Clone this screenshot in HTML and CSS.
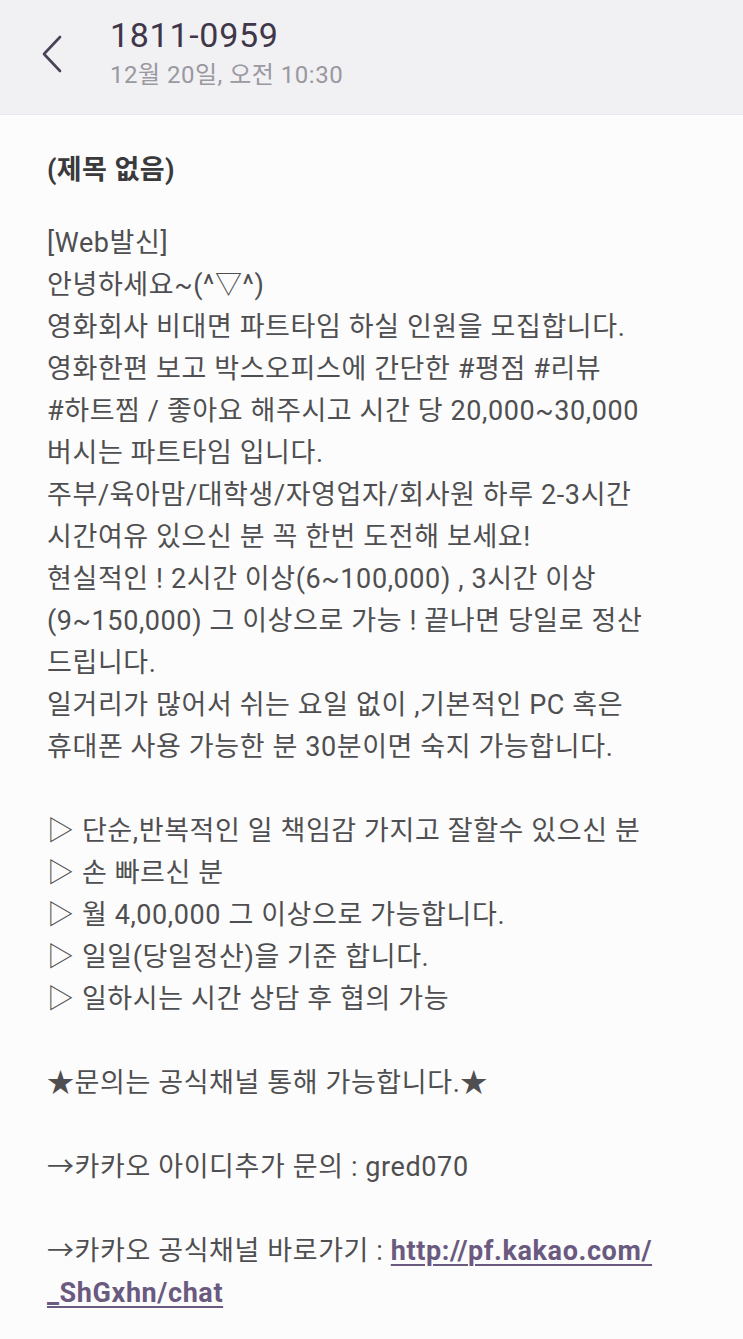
FILE: index.html
```html
<!DOCTYPE html>
<html lang="ko">
<head>
<meta charset="utf-8">
<link rel="stylesheet" href="styles.css">
</head>
<body>
<header class="topbar">
  <div class="back">
    <svg width="24" height="40" viewBox="0 0 24 40"><path d="M20 3 L4 20 L20 37" fill="none" stroke="#4a4256" stroke-width="2.6" stroke-linecap="round" stroke-linejoin="round"/></svg>
  </div>
  <div class="meta">
    <div class="number">1811-0959</div>
    <div class="date">12월 20일, 오전 10:30</div>
  </div>
</header>
<main class="content">
  <div class="subject">(제목 없음)</div>
  <div class="body">
    <div class="ln">[Web발신]</div>
    <div class="ln">안녕하세요~(^▽^)</div>
    <div class="ln">영화회사 비대면 파트타임 하실 인원을 모집합니다.</div>
    <div class="ln">영화한편 보고 박스오피스에 간단한 #평점 #리뷰</div>
    <div class="ln">#하트찜 / 좋아요 해주시고 시간 당 20,000~30,000</div>
    <div class="ln">버시는 파트타임 입니다.</div>
    <div class="ln">주부/육아맘/대학생/자영업자/회사원 하루 2-3시간</div>
    <div class="ln">시간여유 있으신 분 꼭 한번 도전해 보세요!</div>
    <div class="ln">현실적인 ! 2시간 이상(6~100,000) , 3시간 이상</div>
    <div class="ln">(9~150,000) 그 이상으로 가능 ! 끝나면 당일로 정산</div>
    <div class="ln">드립니다.</div>
    <div class="ln">일거리가 많어서 쉬는 요일 없이 ,기본적인 PC 혹은</div>
    <div class="ln">휴대폰 사용 가능한 분 30분이면 숙지 가능합니다.</div>
    <div class="ln blank"></div>
    <div class="ln">▷ 단순,반복적인 일 책임감 가지고 잘할수 있으신 분</div>
    <div class="ln">▷ 손 빠르신 분</div>
    <div class="ln">▷ 월 4,00,000 그 이상으로 가능합니다.</div>
    <div class="ln">▷ 일일(당일정산)을 기준 합니다.</div>
    <div class="ln">▷ 일하시는 시간 상담 후 협의 가능</div>
    <div class="ln blank"></div>
    <div class="ln">★문의는 공식채널 통해 가능합니다.★</div>
    <div class="ln blank"></div>
    <div class="ln">→카카오 아이디추가 문의 : gred070</div>
    <div class="ln blank"></div>
    <div class="ln">→카카오 공식채널 바로가기 : <a class="link" href="#">http://pf.kakao.com/</a></div>
    <div class="ln"><a class="link" href="#">_ShGxhn/chat</a></div>
  </div>
</main>
</body>
</html>
```
FILE: styles.css
```css
html, body {
  margin: 0;
  padding: 0;
}
body {
  background: #fcfcfc;
  font-family: Roboto, "Noto Sans CJK KR", "Noto Sans", sans-serif;
  color: #4f4f51;
}
.topbar {
  height: 114px;
  background: #f1f0f3;
  border-bottom: 1px solid #e9e8ec;
  display: flex;
  align-items: flex-start;
}
.back {
  width: 110px;
  display: flex;
  justify-content: center;
  padding-top: 34px;
  box-sizing: border-box;
  padding-right: 6px;
}
.meta {
  padding-top: 14px;
}
.number {
  font-size: 34px;
  line-height: 42px;
  color: #3f3749;
  letter-spacing: 0.7px;
}
.date {
  font-size: 24px;
  line-height: 34px;
  color: #9a98a0;
  margin-top: 2px;
  letter-spacing: 0.5px;
}
.content {
  padding: 34px 20px 0 47px;
}
.subject {
  font-size: 27px;
  line-height: 42px;
  font-weight: 700;
  color: #3a3a3c;
  margin-bottom: 31px;
  letter-spacing: 0.4px;
}
.body {
  font-size: 27px;
  line-height: 42px;
  letter-spacing: 0.6px;
}
.ln {
  white-space: nowrap;
  height: 42px;
}
.link {
  color: #6a5a80;
  font-weight: 700;
  text-decoration: underline;
  text-underline-offset: 4px;
  text-decoration-thickness: 2px;
}
```
